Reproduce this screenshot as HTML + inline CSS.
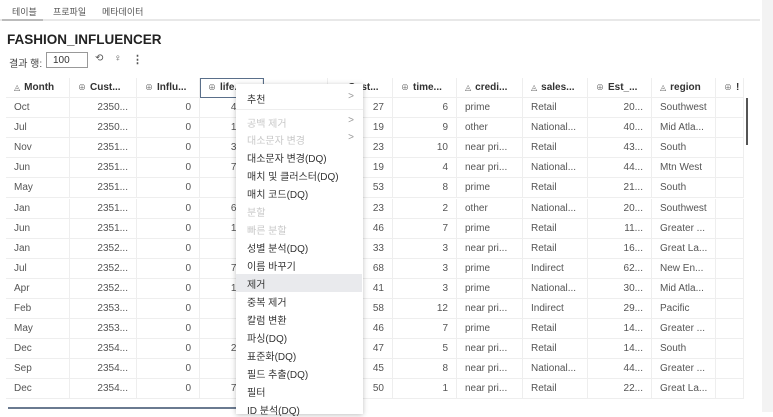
<!DOCTYPE html>
<html><head><meta charset="utf-8"><style>
*{margin:0;padding:0;box-sizing:border-box}
body{width:773px;height:412px;overflow:hidden;background:#fff;font-family:"Liberation Sans","Noto Sans CJK KR",sans-serif;color:#333;position:relative;font-size:11px}
.tabs{position:absolute;top:0;left:0;width:760px;height:21px;border-bottom:2px solid #e8e8e8}
.tab{position:absolute;top:5px;font-size:9px;color:#555}
.tabul{position:absolute;left:2px;top:19px;width:41px;height:2px;background:#bbb}
.title{position:absolute;left:7px;top:32px;font-size:13.5px;font-weight:bold;color:#222}
.rr{position:absolute;left:9px;top:55px;font-size:10px;color:#444}
.inp{position:absolute;left:46px;top:52px;width:42px;height:16px;border:1px solid #999;font-size:10px;padding:2px 6px}
.grid{position:absolute;left:6px;top:78px}
.c{position:absolute;height:20px;line-height:20px;padding:0 8px;white-space:nowrap;overflow:hidden;font-size:10px;color:#555;border-right:1px solid #eee;border-bottom:1px solid #eee}
.h{font-weight:bold;color:#333;font-size:10px}
.r{text-align:right}
.ic{color:#666;font-weight:normal;font-size:8px;margin-right:4px}
.menu{position:absolute;left:236px;top:84px;width:127px;height:330px;background:#fff;box-shadow:0 1px 5px rgba(0,0,0,.25)}
.mi{position:absolute;left:11px;font-size:10px;color:#333}
.dis{color:#c8c8c8}
.arr{position:absolute;right:9px;font-size:10px;color:#999}
.right{position:absolute;left:762px;top:0;width:11px;height:412px;background:#f3f3f3}
</style></head><body>
<div class="tabs"><span class="tab" style="left:12px">테이블</span><span class="tab" style="left:53px">프로파일</span><span class="tab" style="left:102px">메타데이터</span><div class="tabul"></div></div>
<div class="title">FASHION_INFLUENCER</div>
<div class="rr">결과 행:</div><div class="inp">100</div>
<div style="position:absolute;left:95px;top:53px;font-size:10px;color:#555">⟲</div>
<div style="position:absolute;left:114px;top:53px;font-size:10px;color:#555">♀</div>
<div style="position:absolute;left:132px;top:53px;font-size:11px;color:#555;font-weight:bold">⋮</div>
<div class="right"></div>
<div id="g" class="grid"></div>
<div style="position:absolute;left:200px;top:78px;width:64px;height:20px;border:1px solid #5a6f8a"></div>
<div style="position:absolute;left:746px;top:98px;width:2px;height:47px;background:#555"></div>
<div style="position:absolute;left:8px;top:407px;width:240px;height:2px;background:#6a7a90"></div>
<div class="menu">
<div class="mi" style="top:7px">추천</div><div class="arr" style="top:7px">&gt;</div>
<div style="position:absolute;left:0;right:0;top:25px;border-top:1px solid #eee"></div>
<div class="mi dis" style="top:31px">공백 제거</div><div class="arr dis" style="top:31px">&gt;</div>
<div class="mi dis" style="top:48px">대소문자 변경</div><div class="arr dis" style="top:48px">&gt;</div>
<div class="mi" style="top:66px">대소문자 변경(DQ)</div>
<div class="mi" style="top:84px">매치 및 클러스터(DQ)</div>
<div class="mi" style="top:102px">매치 코드(DQ)</div>
<div class="mi dis" style="top:120px">분할</div>
<div class="mi dis" style="top:138px">빠른 분할</div>
<div class="mi" style="top:156px">성별 분석(DQ)</div>
<div class="mi" style="top:174px">이름 바꾸기</div>
<div style="position:absolute;left:0;width:126px;top:190px;height:18px;background:#e9eaed"></div>
<div class="mi" style="top:192px">제거</div>
<div class="mi" style="top:210px">중복 제거</div>
<div class="mi" style="top:228px">칼럼 변환</div>
<div class="mi" style="top:246px">파싱(DQ)</div>
<div class="mi" style="top:264px">표준화(DQ)</div>
<div class="mi" style="top:282px">필드 추출(DQ)</div>
<div class="mi" style="top:300px">필터</div>
<div class="mi" style="top:318px">ID 분석(DQ)</div>
</div>
<script>
var xs=[0,64,131,194,257,322,387,451,517,582,646,710,738];
var hd=[["◬","Month"],["⊕","Cust..."],["⊕","Influ..."],["⊕","life..."],["",""],["⊕","Cust..."],["⊕","time..."],["◬","credi..."],["◬","sales..."],["⊕","Est_..."],["◬","region"],["⊕","!"]];
var al=[0,1,1,1,1,1,1,0,0,1,0,0];
var rows=[["Oct","2350...","0","46","","27","6","prime","Retail","20...","Southwest"],
["Jul","2350...","0","13","","19","9","other","National...","40...","Mid Atla..."],
["Nov","2351...","0","36","","23","10","near pri...","Retail","43...","South"],
["Jun","2351...","0","74","","19","4","near pri...","National...","44...","Mtn West"],
["May","2351...","0","3","","53","8","prime","Retail","21...","South"],
["Jan","2351...","0","66","","23","2","other","National...","20...","Southwest"],
["Jun","2351...","0","17","","46","7","prime","Retail","11...","Greater ..."],
["Jan","2352...","0","","","33","3","near pri...","Retail","16...","Great La..."],
["Jul","2352...","0","74","","68","3","prime","Indirect","62...","New En..."],
["Apr","2352...","0","19","","41","3","prime","National...","30...","Mid Atla..."],
["Feb","2353...","0","8","","58","12","near pri...","Indirect","29...","Pacific"],
["May","2353...","0","","","46","7","prime","Retail","14...","Greater ..."],
["Dec","2354...","0","24","","47","5","near pri...","Retail","14...","South"],
["Sep","2354...","0","3","","45","8","near pri...","National...","44...","Greater ..."],
["Dec","2354...","0","76","","50","1","near pri...","Retail","22...","Great La..."]];
var h="";
for(var i=0;i<12;i++){h+='<div class="c h" style="left:'+xs[i]+'px;top:0;width:'+(xs[i+1]-xs[i])+'px">'+(hd[i][0]?'<span class="ic">'+hd[i][0]+'</span>':'')+hd[i][1]+'</div>';}
for(var r=0;r<rows.length;r++){for(var i=0;i<12;i++){var v=rows[r][i]||"";var pr=(i==3)?'padding-right:20px;':'';h+='<div class="c'+(al[i]?' r':'')+'" style="'+pr+'left:'+xs[i]+'px;top:'+(20+r*20.1)+'px;width:'+(xs[i+1]-xs[i])+'px">'+v+'</div>';}}
document.getElementById("g").innerHTML=h;
</script>
</body></html>
